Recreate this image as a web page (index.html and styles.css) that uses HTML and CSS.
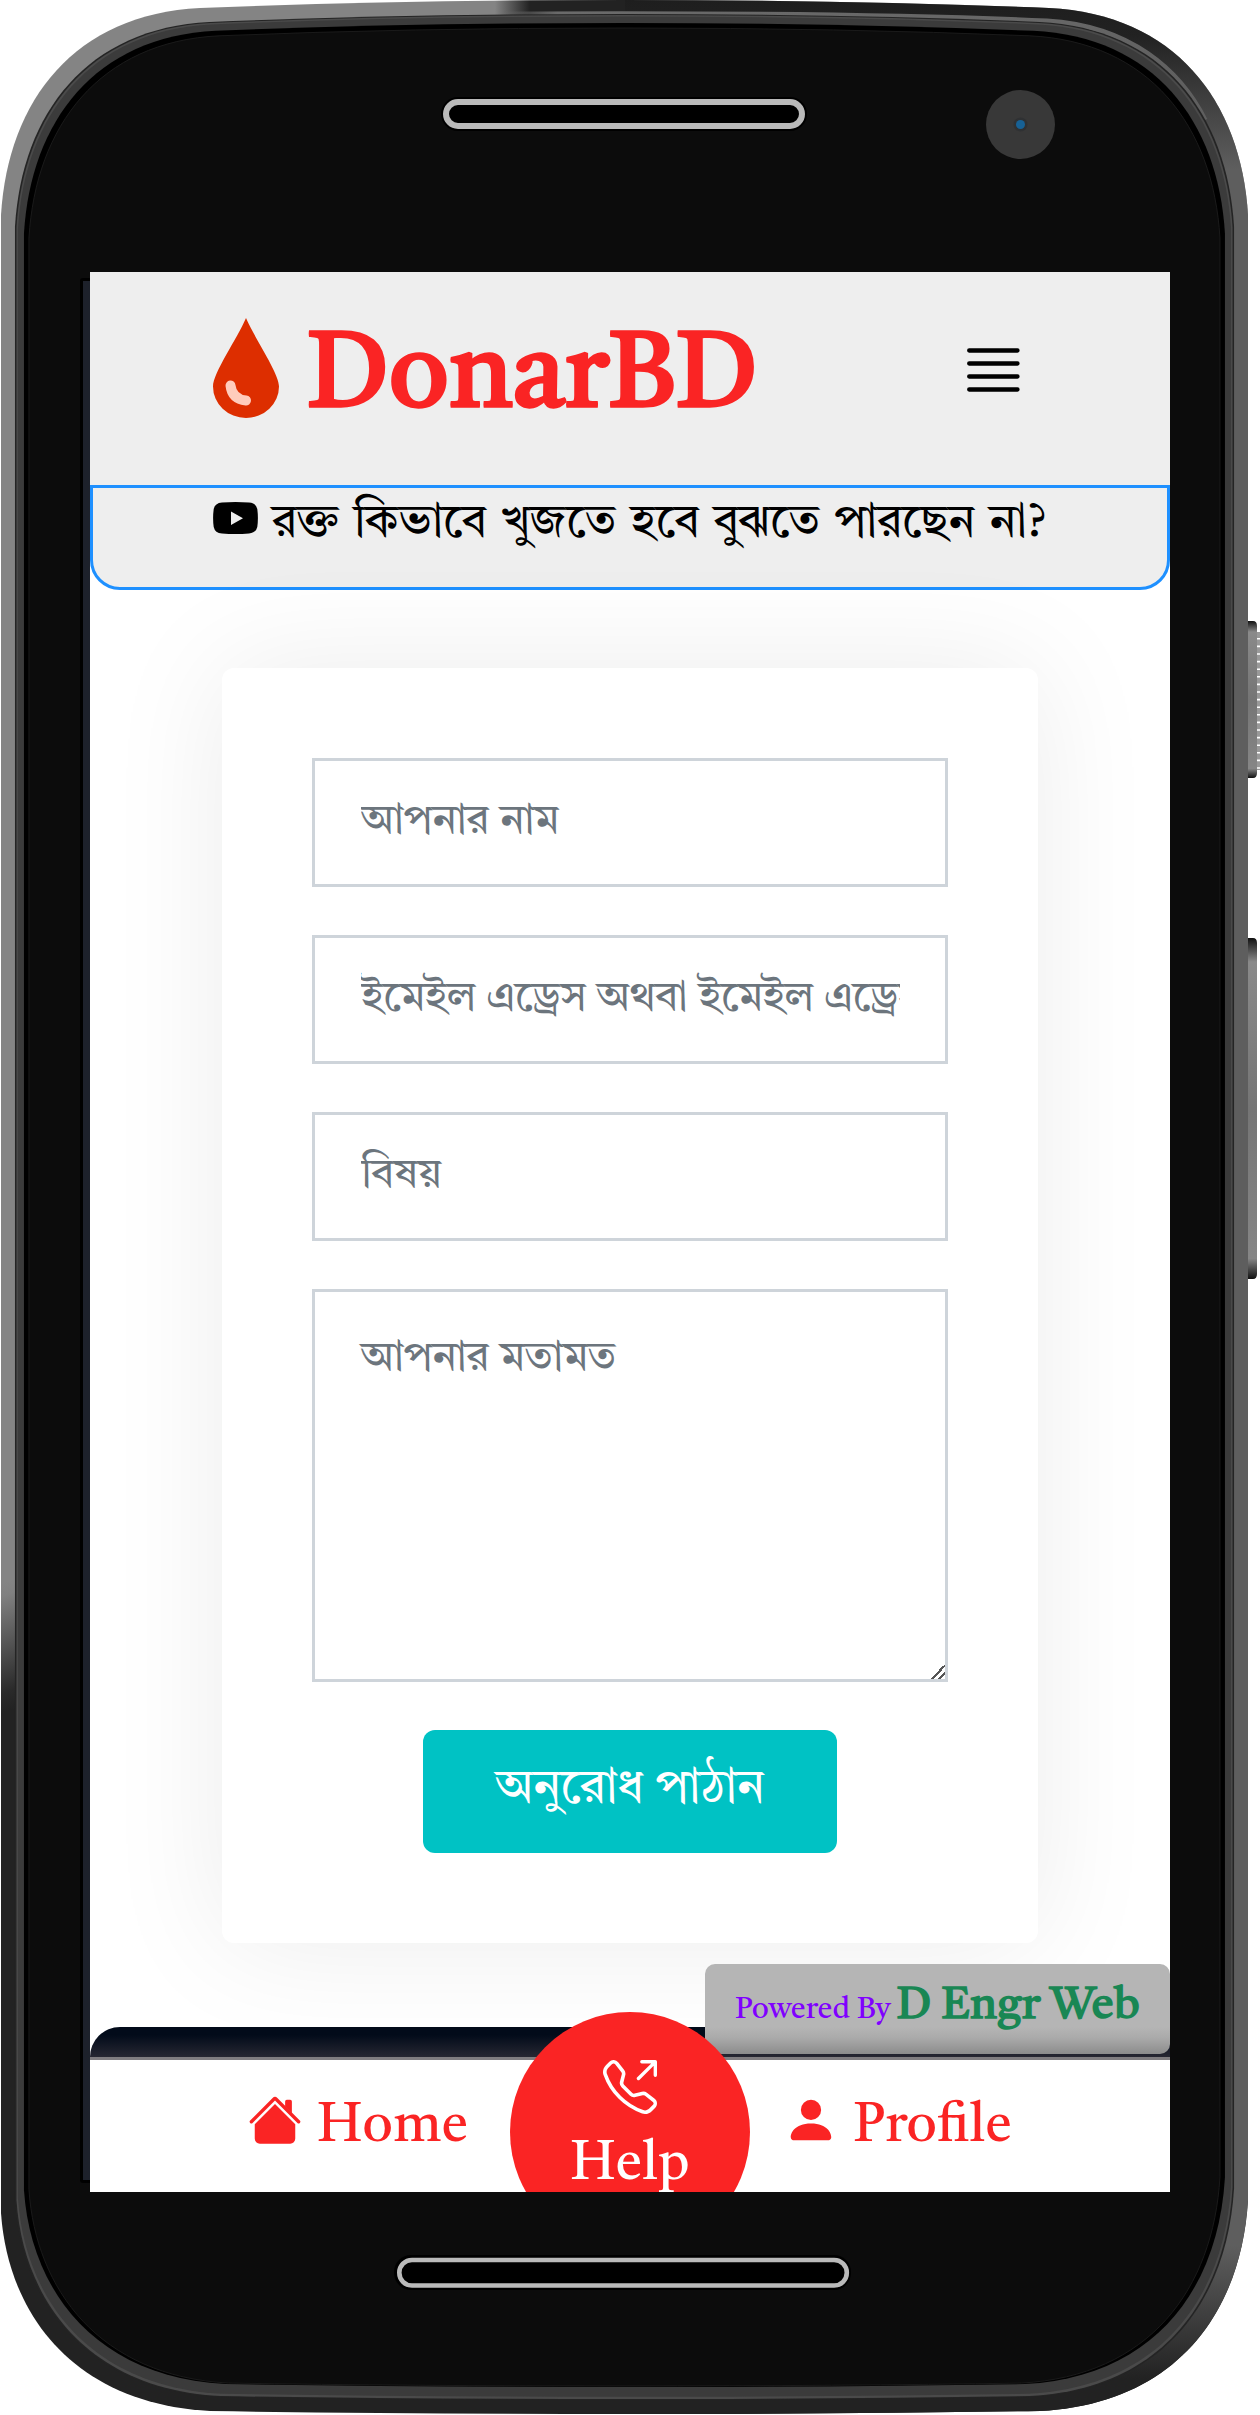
FILE: index.html
```html
<!DOCTYPE html>
<html lang="bn">
<head>
<meta charset="utf-8">
<title>DonarBD</title>
<link rel="stylesheet" href="styles.css">
</head>
<body>
<div class="phone">
  <svg class="frame" viewBox="0 0 1260 2415" aria-hidden="true">
    <defs>
      <path id="body" d="M1 215C8 100 75 14 200 8Q400 0 624 0Q850 0 1049 8C1174 14 1241 100 1248 215V2200C1241 2315 1174 2404 1040 2411Q850 2414 624 2414Q400 2414 210 2411C75 2404 8 2315 1 2213Z"/>
      <linearGradient id="rimLeft" x1="0" y1="1584" x2="40" y2="1700" gradientUnits="userSpaceOnUse">
        <stop offset="0" stop-color="#848484"/><stop offset=".1" stop-color="#808080"/><stop offset=".85" stop-color="#2a2a2a"/><stop offset="1" stop-color="#222"/>
      </linearGradient>
      <linearGradient id="rimRight" x1="0" y1="0" x2="0" y2="2415" gradientUnits="userSpaceOnUse">
        <stop offset="0" stop-color="#1e1e1e"/><stop offset=".015" stop-color="#222"/><stop offset=".07" stop-color="#5e5e5e"/><stop offset=".93" stop-color="#5e5e5e"/><stop offset=".985" stop-color="#222"/><stop offset="1" stop-color="#222"/>
      </linearGradient>
      <linearGradient id="rimTop" x1="495" y1="0" x2="530" y2="0" gradientUnits="userSpaceOnUse">
        <stop offset="0" stop-color="#222" stop-opacity="0"/><stop offset="1" stop-color="#222"/>
      </linearGradient>
      <linearGradient id="sheen" x1="500" y1="0" x2="1220" y2="0" gradientUnits="userSpaceOnUse">
        <stop offset="0" stop-color="#707070" stop-opacity="0"/><stop offset=".08" stop-color="#6a6a6a"/><stop offset=".8" stop-color="#666"/><stop offset="1" stop-color="#5e5e5e"/>
      </linearGradient>
      <linearGradient id="key" x1="0" y1="0" x2="0" y2="1">
        <stop offset="0" stop-color="#111"/><stop offset=".07" stop-color="#8a8a8a"/><stop offset=".5" stop-color="#757575"/><stop offset=".94" stop-color="#868686"/><stop offset="1" stop-color="#111"/>
      </linearGradient>
      <clipPath id="rightHalf"><rect x="620" width="640" height="2415"/></clipPath>
      <clipPath id="shape"><use href="#body"/></clipPath>
    </defs>
    <path d="M1258.5 632V770" stroke="#999" stroke-width="3" stroke-dasharray="6 1.6"/>
    <path d="M1247 621h6q4 0 4 5v147q0 5-4 5h-6z" fill="url(#key)"/>
    <path d="M1247 938h6q4 0 4 5v331q0 5-4 5h-6z" fill="url(#key)"/>
    <use href="#body" fill="url(#rimLeft)"/>
    <g clip-path="url(#rightHalf)"><use href="#body" fill="url(#rimRight)"/></g>
    <g clip-path="url(#shape)">
      <rect x="495" width="130" height="20" fill="url(#rimTop)"/>
      <path d="M500 14Q850 12 1047 21C1130 26 1180 70 1205 120" fill="none" stroke="url(#sheen)" stroke-width="5"/>
    </g>
    <use href="#body" transform="translate(14 14) scale(.9776 .9884)" fill="#242424"/>
    <use href="#body" transform="translate(15.5 15) scale(.9752 .9876)" fill="#4a4a4a"/>
    <use href="#body" transform="translate(17 16.5) scale(.9728 .9860)" fill="#3b3b3b"/>
    <use href="#body" transform="translate(23 23) scale(.9631 .9793)"/>
    <use href="#body" transform="translate(28 28) scale(.9551 .9768)" fill="#0c0c0c" stroke="#1b1b1b"/>
    <rect x="441" y="97" width="366" height="34" rx="17"/>
    <rect x="446" y="102" width="356" height="24" rx="12" stroke="#bababa" stroke-width="6"/>
    <rect x="394" y="2255" width="457" height="35" rx="17"/>
    <rect x="399.3" y="2260" width="447.5" height="25.5" rx="12.7" stroke="#bababa" stroke-width="4.6"/>
    <circle cx="1020.5" cy="124.5" r="34.5" fill="#383838"/>
    <circle cx="1020.5" cy="124.5" r="7" fill="#2f3133"/>
    <circle cx="1020.5" cy="124.5" r="4.5" fill="#176195"/>
    <rect x="80" y="278" width="20" height="1905" rx="3"/>
    <rect x="83" y="281" width="12" height="1899" fill="#1d212b"/>
  </svg>

  <div class="screen">
    <header class="header">
      <div class="brand">
        <svg class="drop" viewBox="0 0 66 100"><path d="M33 0C42 21 66 55 66 68.500A33 31.500 0 0 1 0 68.500C0 55 24 21 33 0Z" fill="#dd2e00"/><path d="M17.500 67.500Q19 81 33 82.500" fill="none" stroke="#ffccbc" stroke-width="10" stroke-linecap="round"/></svg>
        <span class="brand-name">DonarBD</span>
      </div>
      <svg class="menu" viewBox="0 0 53 44"><path d="M2.200 2.500H50.500M2.200 15.500H50.500M2.200 28.500H50.500M2.200 41.500H50.500" stroke="#000" stroke-width="4.300" stroke-linecap="round"/></svg>
    </header>

    <div class="video-bar">
      <svg class="youtube" viewBox="0 0 45 32"><path fill-rule="evenodd" d="M9 .5Q22.500-.5 36 .5Q43 1 44.300 7Q45.500 16 44.300 25Q43 31 36 31.500Q22.500 32.500 9 31.500Q2 31 .7 25Q-.5 16 .7 7Q2 1 9 .5ZM18 9.500V23L30 16.200Z"/></svg>
      <span class="video-text">রক্ত কিভাবে খুজতে হবে বুঝতে পারছেন না?</span>
    </div>

    <main class="main">
      <form class="card">
        <input class="field name" placeholder="আপনার নাম">
        <input class="field email" placeholder="ইমেইল এড্রেস অথবা ইমেইল এড্রেস">
        <input class="field subject" placeholder="বিষয়">
        <textarea class="field message" placeholder="আপনার মতামত"></textarea>
        <button class="send" type="button">অনুরোধ পাঠান</button>
      </form>
    </main>

    <div class="page-footer"></div>
    <div class="powered"><span class="powered-by">Powered By</span><span class="maker">D Engr Web</span></div>

    <nav class="nav">
      <a class="nav-item home"><svg class="icon" viewBox="0 0 16 16"><path d="m8 3.293 6 6V13.500a1.500 1.500 0 0 1-1.500 1.500h-9A1.500 1.500 0 0 1 2 13.500V9.293l6-6zm5-.793V6l-2-2V2.500a.5.5 0 0 1 .5-.5h1a.5.5 0 0 1 .5.5z"/><path d="M7.293 1.500a1 1 0 0 1 1.414 0l6.647 6.646a.5.5 0 0 1-.708.708L8 2.207 1.354 8.854a.5.5 0 1 1-.708-.708L7.293 1.500z"/></svg><span>Home</span></a>
      <a class="nav-item profile"><svg class="icon" viewBox="0 0 16 16"><path d="M3 14s-1 0-1-1 1-4 6-4 6 3 6 4-1 1-1 1H3zm5-6a3 3 0 1 0 0-6 3 3 0 0 0 0 6z"/></svg><span>Profile</span></a>
      <a class="help">
        <svg class="icon" viewBox="0 0 16 16"><path d="M3.654 1.328a.678.678 0 0 0-1.015-.063L1.605 2.300c-.483.484-.661 1.169-.45 1.770a17.568 17.568 0 0 0 4.168 6.608 17.569 17.569 0 0 0 6.608 4.168c.601.211 1.286.033 1.770-.45l1.034-1.034a.678.678 0 0 0-.063-1.015l-2.307-1.794a.678.678 0 0 0-.58-.122l-2.190.547a1.745 1.745 0 0 1-1.657-.459L5.482 8.062a1.745 1.745 0 0 1-.46-1.657l.548-2.190a.678.678 0 0 0-.122-.58L3.654 1.328zM1.884.511a1.745 1.745 0 0 1 2.612.163L6.290 2.980c.329.423.445.974.315 1.494l-.547 2.190a.678.678 0 0 0 .178.643l2.457 2.457a.678.678 0 0 0 .644.178l2.189-.547a1.745 1.745 0 0 1 1.494.315l2.306 1.794c.829.645.905 1.870.163 2.611l-1.034 1.034c-.74.74-1.846 1.065-2.877.702a18.634 18.634 0 0 1-7.010-4.420 18.634 18.634 0 0 1-4.420-7.009c-.362-1.030-.037-2.137.703-2.877L1.885.511zM11 .5a.5.5 0 0 1 .5-.5h4a.5.5 0 0 1 .5.5v4a.5.5 0 0 1-1 0V1.707l-4.146 4.147a.5.5 0 0 1-.708-.708L14.293 1H11.500a.5.5 0 0 1-.5-.5z"/></svg>
        <span>Help</span>
      </a>
    </nav>
  </div>
</div>
</body>
</html>
```
FILE: styles.css
```css
* { box-sizing: border-box; }
body { margin: 0; background: #fff; overflow: hidden; font-family: "Tiro Bangla", "Liberation Serif", "Noto Serif Bengali", serif; }
.phone { position: relative; width: 1260px; height: 2415px; padding: 272px 90px 223px; }
.frame { position: absolute; left: 0; top: 0; width: 1260px; height: 2415px; }
.screen { position: relative; width: 1080px; height: 1920px; background: #fff; overflow: hidden; display: flex; flex-direction: column; }

.header { height: 213px; flex: none; background: #eee; display: flex; justify-content: space-between; padding: 46px 150px 0 123px; }
.brand { display: flex; align-items: flex-start; gap: 28px; }
.drop { width: 66px; height: 100px; flex: none; }
.brand-name { font-size: 105.700px; font-weight: 700; line-height: 123px; color: #fa2424; }
.menu { width: 53px; height: 44px; margin-top: 30px; }

.video-bar { height: 105px; flex: none; background: #eee; border: 3px solid #1e90ff; border-radius: 0 0 30px 30px; display: flex; gap: 14px; padding: 14px 0 0 120px; }
.youtube { width: 45px; height: 32px; }
.video-text { font-size: 46.300px; line-height: 45px; word-spacing: 2.500px; white-space: nowrap; color: #000; }

.main { flex: none; padding: 78px 132px 84px; }
.card { height: 1275px; background: #fff; border-radius: 12px; padding: 90px; display: flex; flex-direction: column; align-items: center; box-shadow: 0 0 120px rgba(0, 20, 15, .08); }
.field { display: block; width: 636px; height: 129px; flex: none; margin: 0 0 48px; border: 3px solid #ced4da; padding: 0 45px 2px 46px; font-family: inherit; font-size: 42px; background: #fff; border-radius: 0; }
.field::placeholder { color: #6c757d; opacity: 1; }
.message { height: 393px; padding-top: 37px; line-height: 60px; }
.message::-webkit-resizer { background: linear-gradient(135deg, transparent 50%, #555 50% 60%, transparent 60% 74%, #555 74% 84%, transparent 84%); }
.send { width: 414px; height: 123px; border: 0; border-radius: 12px; background: #00c2c4; color: #fff; font-family: inherit; font-size: 48px; padding: 0 0 4px; white-space: nowrap; }

.page-footer { height: 165px; flex: none; border-radius: 30px 0 0; background: linear-gradient(#020b1a 8px, #272732 30px); }
.powered { position: absolute; left: 615px; top: 1692px; width: 465px; height: 90px; border-radius: 10px; background: linear-gradient(#b5b5b5 70%, #aaa 82%, #8c8c8c); display: flex; align-items: baseline; padding: 18px 0 0 30px; gap: 6px; white-space: nowrap; }
.powered-by { font-size: 30px; color: #8000ff; }
.maker { font-size: 45px; line-height: 50px; font-weight: 700; color: #198754; }

.nav { position: absolute; left: 0; right: 0; bottom: 0; height: 132px; background: #fff; display: flex; justify-content: space-between; padding: 33px 158px 0; color: #fa2424; font-size: 54px; line-height: 69px; box-shadow: 0 -3px 0 #807d80; }
.nav-item { display: flex; gap: 15px; }
.icon { width: 54px; height: 54px; fill: currentColor; }
.help { position: absolute; left: 420px; top: -48px; width: 240px; height: 240px; border-radius: 50%; background: #fa2424; color: #fff; display: flex; flex-direction: column; align-items: center; padding-top: 48px; gap: 17px; }
```
